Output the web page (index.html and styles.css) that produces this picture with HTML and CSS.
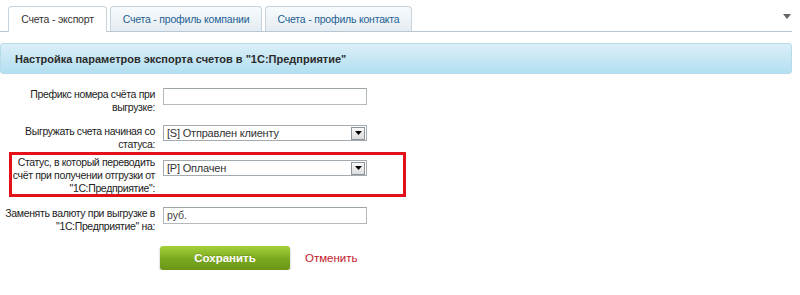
FILE: index.html
```html
<!DOCTYPE html>
<html lang="ru">
<head>
<meta charset="utf-8">
<title>Счета - экспорт</title>
<link rel="stylesheet" href="styles.css">
</head>
<body>
<div class="tabs">
  <div class="tab tab--active tab--w1">Счета - экспорт</div>
  <div class="tab tab--w2">Счета - профиль компании</div>
  <div class="tab tab--w3">Счета - профиль контакта</div>
  <div class="tabs-more">
    <svg width="8" height="5" viewBox="0 0 8 5"><path d="M0 0H8L4 5Z" fill="#666"/></svg>
  </div>
</div>

<div class="panel-title">Настройка параметров экспорта счетов в "1С:Предприятие"</div>

<div class="form">
  <div class="row">
    <div class="label">Префикс номера счёта при выгрузке:</div>
    <div class="input"></div>
  </div>
  <div class="row row--before-flag">
    <div class="label">Выгружать счета начиная со статуса:</div>
    <div class="select">
      <span class="select-text">[S] Отправлен клиенту</span>
      <span class="select-btn"><svg width="7" height="4" viewBox="0 0 7 4"><path d="M0 0H7L3.5 4Z" fill="#000"/></svg></span>
    </div>
  </div>
  <div class="flag">
    <div class="row row--flag">
      <div class="label">Статус, в который переводить счёт при получении отгрузки от "1С:Предприятие":</div>
      <div class="select">
        <span class="select-text">[P] Оплачен</span>
        <span class="select-btn"><svg width="7" height="4" viewBox="0 0 7 4"><path d="M0 0H7L3.5 4Z" fill="#000"/></svg></span>
      </div>
    </div>
  </div>
  <div class="row row--last">
    <div class="label">Заменять валюту при выгрузке в "1С:Предприятие" на:</div>
    <div class="input"><span class="input-text">руб.</span></div>
  </div>
  <div class="actions">
    <div class="btn-save">Сохранить</div>
    <div class="btn-cancel">Отменить</div>
  </div>
</div>
</body>
</html>
```
FILE: styles.css
```css
html, body {
  margin: 0;
  padding: 0;
  background: #ffffff;
}
body {
  font-family: "Liberation Sans", Arial, sans-serif;
  font-size: 12px;
  color: #222;
}

/* Tabs */
.tabs {
  display: flex;
  align-items: flex-end;
  gap: 3px;
  padding: 6px 0 0 8px;
  margin-right: 8px;
  border-bottom: 1px solid #b9c7d0;
  height: 25px;
}
.tab {
  box-sizing: border-box;
  height: 25px;
  line-height: 24px;
  text-align: center;
  border: 1px solid #c6d3dc;
  border-bottom: none;
  border-radius: 4px 4px 0 0;
  background: linear-gradient(#f8fbfd, #e3ecf2);
  color: #245f92;
  font-size: 10.5px;
  letter-spacing: -0.2px;
}
.tab--active {
  background: #ffffff;
  color: #333;
  height: 26px;
  margin-bottom: -1px;
}
.tab--w1 { width: 99px; }
.tab--w2 { width: 152px; }
.tab--w3 { width: 147px; }
.tabs-more {
  margin-left: auto;
  align-self: flex-start;
  margin-top: 8px;
  margin-right: 1px;
  display: flex;
}

/* Header */
.panel-title {
  box-sizing: border-box;
  margin: 11px 8px 0 0;
  height: 31px;
  line-height: 30px;
  padding-left: 14px;
  border: 1px solid #b6dcec;
  border-radius: 3px;
  background: linear-gradient(#dbeff8, #b2dff0);
  font-weight: bold;
  color: #2b2b2b;
  font-size: 11px;
}

/* Form */
.form {
  padding-top: 14px;
}
.row {
  display: flex;
  align-items: flex-start;
  gap: 8px;
  margin-bottom: 11px;
}
.row--before-flag {
  margin-bottom: 1px;
}
.label {
  box-sizing: border-box;
  width: 155px;
  text-align: right;
  line-height: 13px;
  font-size: 10.5px;
  letter-spacing: -0.35px;
  color: #222;
}
.row--flag {
  margin-bottom: 0;
}
.row--flag .label {
  width: 143px;
  padding-top: 1px;
}
.row--flag .select {
  margin-top: 5px;
}
.row--last {
  margin-bottom: 0;
}

.flag {
  box-sizing: border-box;
  width: 397px;
  height: 45px;
  margin: 0 0 10px 9px;
  border: 3px solid #e3121a;
}

.input {
  box-sizing: border-box;
  width: 204px;
  height: 17px;
  border: 1px solid #b3b9bd;
  border-top-color: #9da4a8;
  background: #fff;
  line-height: 15px;
  padding-left: 3px;
  font-size: 10.5px;
  color: #444;
}

.select {
  box-sizing: border-box;
  width: 204px;
  height: 16px;
  border: 1px solid #a4abb0;
  background: #fff;
  display: flex;
  align-items: center;
  justify-content: space-between;
}
.select-text {
  padding-left: 3px;
  font-size: 11px;
  letter-spacing: -0.2px;
  color: #333;
  line-height: 14px;
}
.select-btn {
  box-sizing: border-box;
  width: 14px;
  height: 13px;
  margin-right: 1px;
  border: 1px solid #8e959a;
  background: linear-gradient(#fafafa, #dcdcdc);
  display: flex;
  align-items: center;
  justify-content: center;
}

/* Actions */
.actions {
  display: flex;
  align-items: center;
  margin: 13px 0 0 160px;
  gap: 15px;
}
.btn-save {
  box-sizing: border-box;
  width: 130px;
  height: 24px;
  line-height: 24px;
  text-align: center;
  color: #fff;
  font-weight: bold;
  font-size: 11.5px;
  border-radius: 3px;
  background: linear-gradient(#a4d13a, #7aa81e 55%, #6a9618);
  box-shadow: 0 1px 2px rgba(0, 0, 0, 0.35);
  text-shadow: 0 -1px 0 rgba(0, 0, 0, 0.15);
}
.btn-cancel {
  color: #c2172b;
  font-size: 11.5px;
}
```
